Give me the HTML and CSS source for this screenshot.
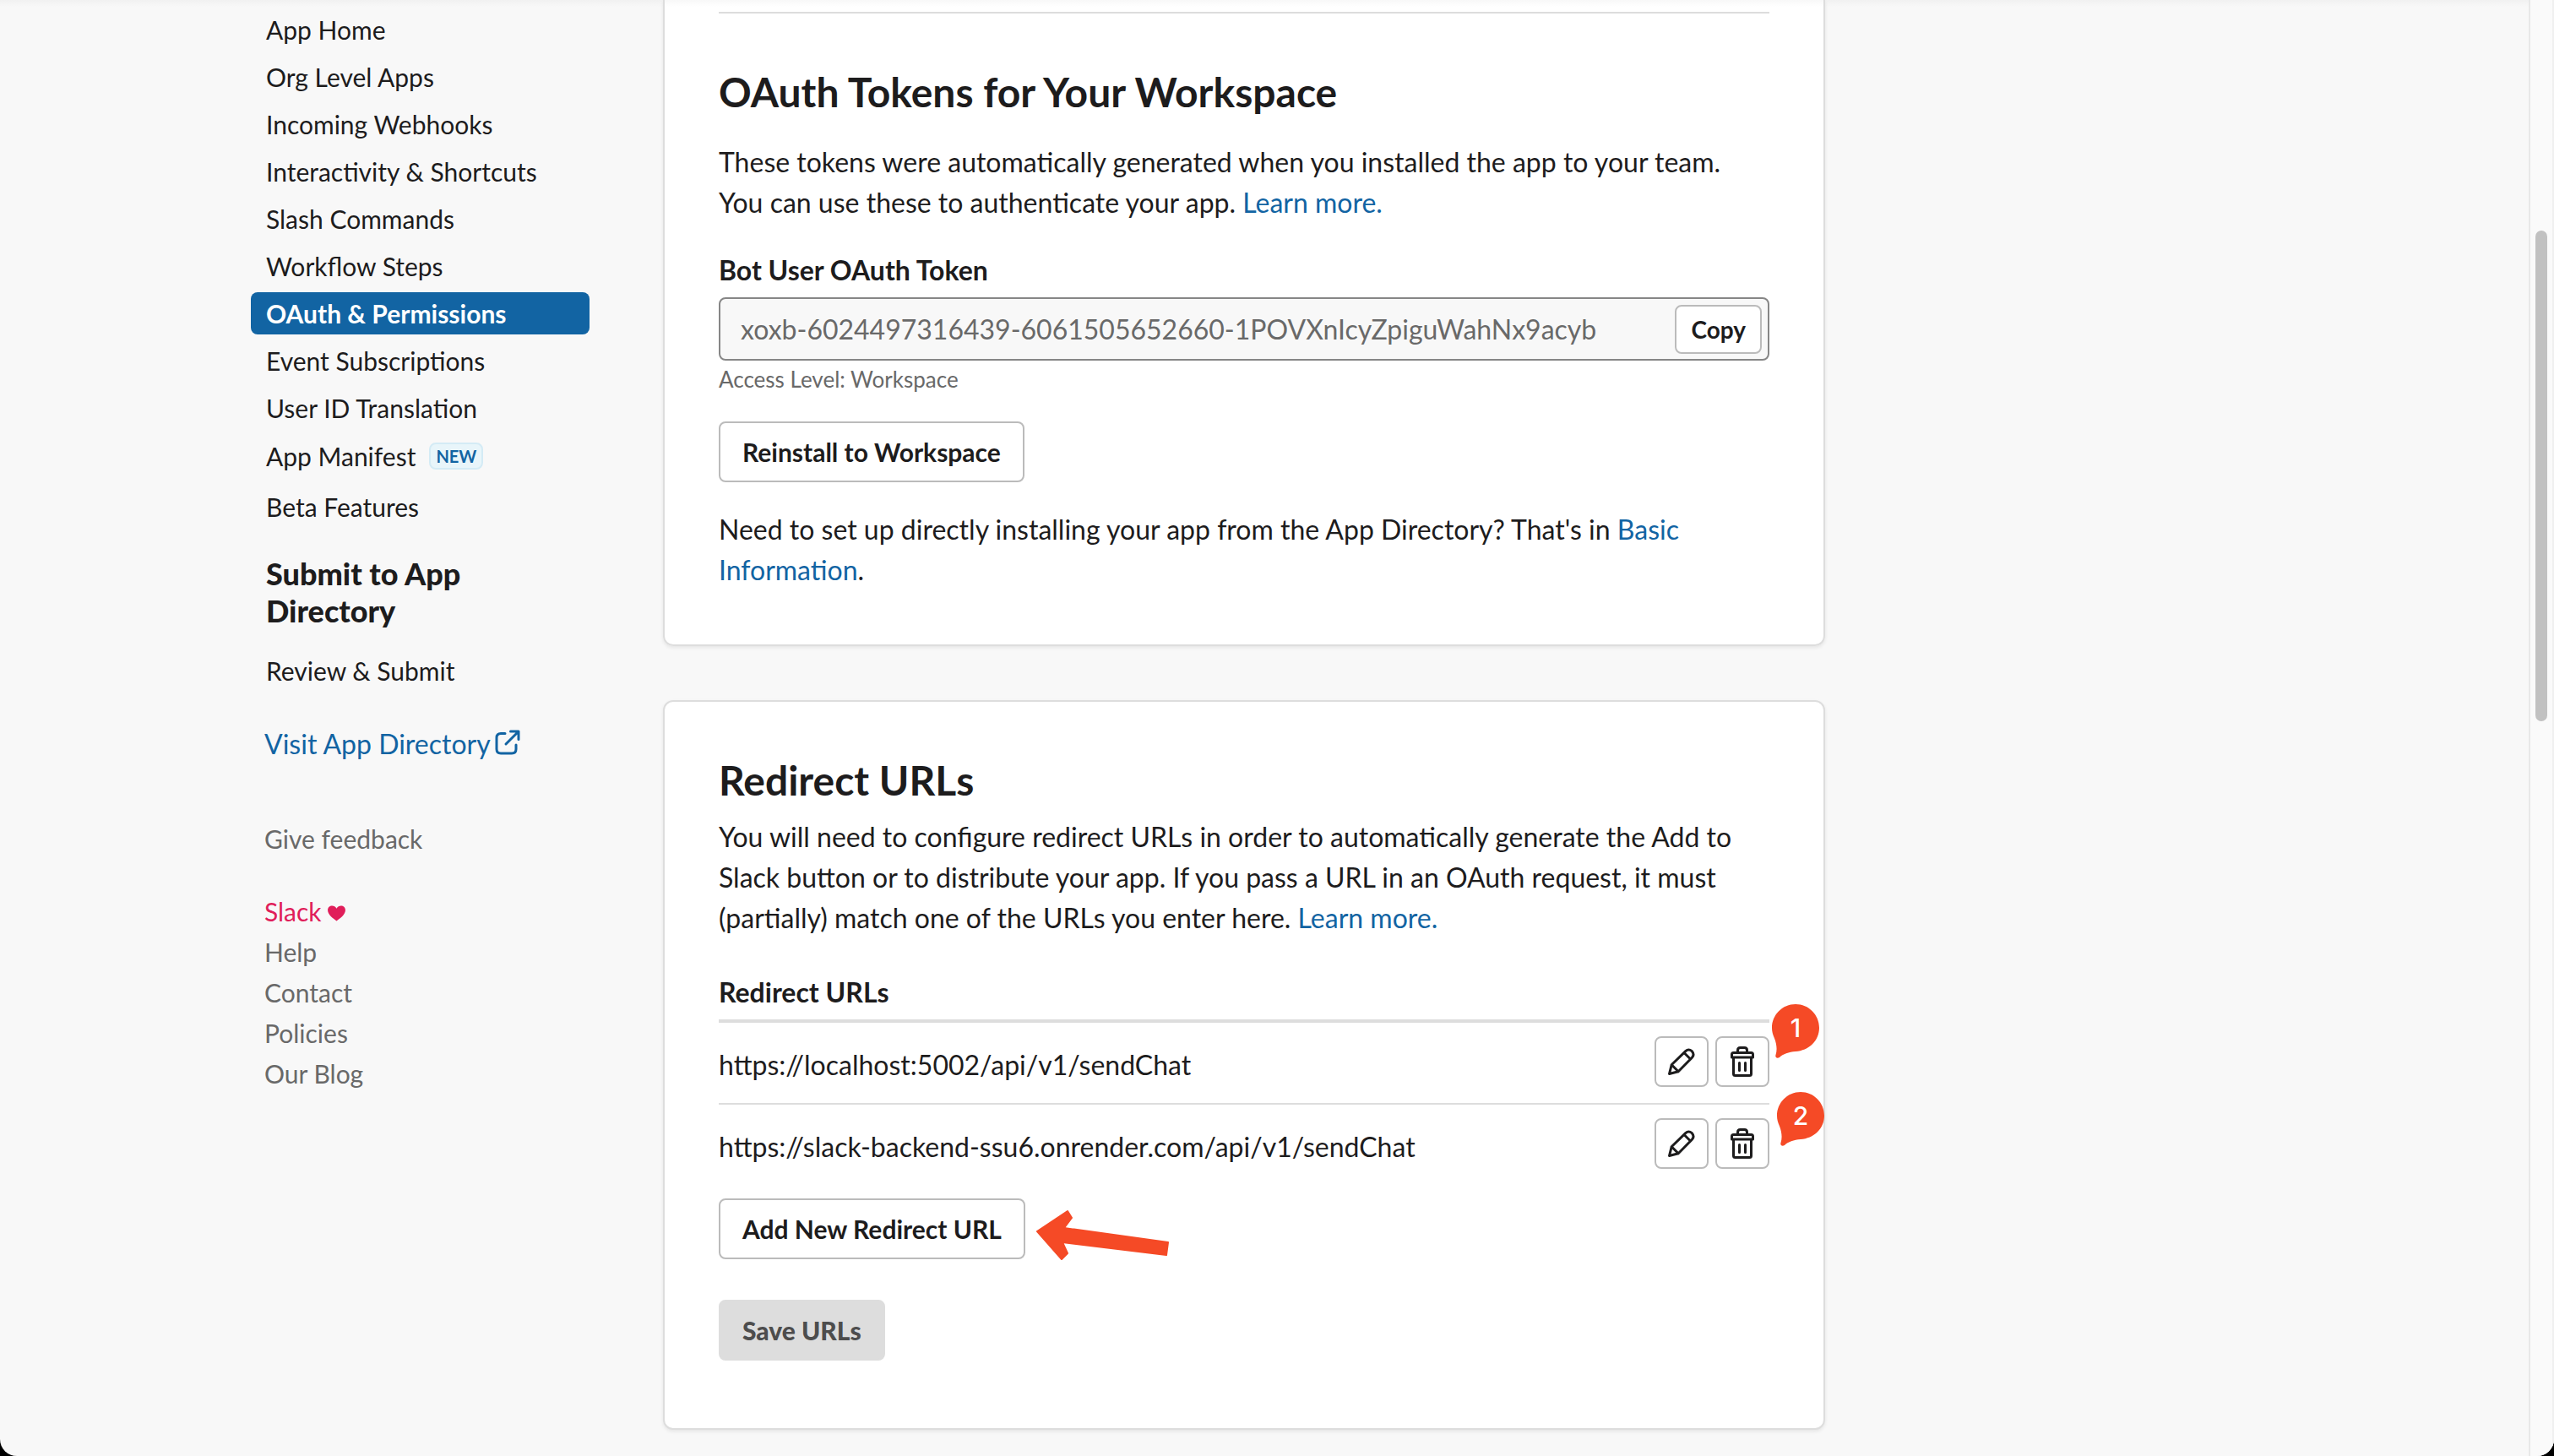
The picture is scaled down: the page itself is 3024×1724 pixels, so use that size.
FILE: index.html
```html
<!DOCTYPE html>
<html lang="en">
<head>
<meta charset="utf-8">
<title>OAuth &amp; Permissions</title>
<link rel="stylesheet" href="styles.css">
</head>
<body>
<svg class="sprite" aria-hidden="true">
  <symbol id="pencil" viewBox="0 0 32 32">
    <path d="M1.500 30.500 L4.200 19.800 L20.800 3.600 Q24.300 0.300 28.300 3.700 Q31.700 7.700 28.400 11.200 L12.200 27.800 Z M4.200 19.800 L12.200 27.800 M19 5.500 L26.500 13"/>
  </symbol>
  <symbol id="trash" viewBox="0 0 28 36">
    <path d="M8.500 7 V4.500 Q8.500 1.500 11.500 1.500 H16.500 Q19.500 1.500 19.500 4.500 V7 M3.500 7.500 H24.500 Q26.500 7.500 26.500 9.500 V13 H1.500 V9.500 Q1.500 7.500 3.500 7.500 Z M3.500 13 V32.500 Q3.500 34.500 5.500 34.500 H22.500 Q24.500 34.500 24.500 32.500 V13 M10.500 19.500 V28.500 M17.500 19.500 V28.500"/>
  </symbol>
  <symbol id="pin" viewBox="0 0 56 64">
    <path d="M28 0 C43.500 0 56 12.500 56 28 C56 43.500 43.500 55 28 56 C20 56.500 13 59 9 63 C6 65 3.500 63 4.500 60 C6.500 54 5.500 47 3 40.500 C1 36 0 32.500 0 28 C0 12.500 12.500 0 28 0 Z"/>
  </symbol>
</svg>
<div class="window">
  <div class="page">
    <aside class="sidebar">
      <nav class="menu">
        <a href="#">App Home</a>
        <a href="#">Org Level Apps</a>
        <a href="#">Incoming Webhooks</a>
        <a href="#">Interactivity &amp; Shortcuts</a>
        <a href="#">Slash Commands</a>
        <a href="#">Workflow Steps</a>
        <a href="#" class="active">OAuth &amp; Permissions</a>
        <a href="#">Event Subscriptions</a>
        <a href="#">User ID Translation</a>
        <a href="#" class="tagged">App Manifest <span class="tag">NEW</span></a>
        <a href="#">Beta Features</a>
      </nav>
      <h3 class="menu-title">Submit to App Directory</h3>
      <nav class="menu">
        <a href="#">Review &amp; Submit</a>
      </nav>
      <a class="directory" href="#">Visit App Directory<svg class="external" viewBox="0 0 30 30"><path d="M12 4.500 H7 Q2 4.500 2 9.500 V23 Q2 28 7 28 H20 Q25 28 25 23 V18 M13 17 L27 3 M18.500 2 H28 V11.500"/></svg></a>
      <div class="links">
        <a class="feedback" href="#">Give feedback</a>
        <a class="love" href="#">Slack <svg class="heart" viewBox="0 0 22 20"><path d="M11 19.500 C8 17 0 12 0 6 C0 0 8 -1.500 11 4 C14 -1.500 22 0 22 6 C22 12 14 17 11 19.500 Z"/></svg></a>
        <a href="#">Help</a>
        <a href="#">Contact</a>
        <a href="#">Policies</a>
        <a href="#">Our Blog</a>
      </div>
    </aside>
    <main class="content">
      <section class="card card-continued">
        <hr class="rule">
        <h2>OAuth Tokens for Your Workspace</h2>
        <p class="intro">These tokens were automatically generated when you installed the app to your team. You can use these to authenticate your app. <a href="#">Learn more.</a></p>
        <label class="label" for="token">Bot User OAuth Token</label>
        <div class="token">
          <input id="token" type="text" readonly value="xoxb-6024497316439-6061505652660-1POVXnIcyZpiguWahNx9acyb">
          <button class="btn btn-small" type="button">Copy</button>
        </div>
        <p class="hint">Access Level: Workspace</p>
        <button class="btn" type="button">Reinstall to Workspace</button>
        <p class="after">Need to set up directly installing your app from the App Directory? That's in <a href="#">Basic Information</a>.</p>
      </section>
      <section class="card">
        <h2>Redirect URLs</h2>
        <p class="lead">You will need to configure redirect URLs in order to automatically generate the Add to Slack button or to distribute your app. If you pass a URL in an OAuth request, it must (partially) match one of the URLs you enter here. <a href="#">Learn more.</a></p>
        <table class="urls">
          <thead>
            <tr><th colspan="2">Redirect URLs</th></tr>
          </thead>
          <tbody>
            <tr>
              <td class="url">https://localhost:5002/api/v1/sendChat</td>
              <td>
                <div class="actions">
                  <button class="btn btn-icon" type="button" aria-label="Edit"><svg class="pencil"><use href="#pencil"/></svg></button>
                  <button class="btn btn-icon" type="button" aria-label="Delete"><svg class="trash"><use href="#trash"/></svg></button>
                  <span class="marker marker-one"><svg><use href="#pin"/></svg><b>1</b></span>
                </div>
              </td>
            </tr>
            <tr>
              <td class="url">https://slack-backend-ssu6.onrender.com/api/v1/sendChat</td>
              <td>
                <div class="actions">
                  <button class="btn btn-icon" type="button" aria-label="Edit"><svg class="pencil"><use href="#pencil"/></svg></button>
                  <button class="btn btn-icon" type="button" aria-label="Delete"><svg class="trash"><use href="#trash"/></svg></button>
                  <span class="marker marker-two"><svg><use href="#pin"/></svg><b>2</b></span>
                </div>
              </td>
            </tr>
          </tbody>
        </table>
        <div class="add">
          <button class="btn" type="button">Add New Redirect URL</button>
          <svg class="arrow" viewBox="0 0 158 62"><path d="M2 27 L38 3 L43 11 L34 23 L157 40 L155 55 L32 40 L38 53 L31 60 Z"/></svg>
        </div>
        <button class="btn btn-disabled" type="button" disabled>Save URLs</button>
      </section>
    </main>
  </div>
  <div class="scrollbar"><div class="thumb"></div></div>
</div>
</body>
</html>
```
FILE: styles.css
```css
* {
  box-sizing: border-box;
}

body {
  margin: 0;
  background: #000;
  color: #1d1c1d;
  font-family: Lato, "Open Sans", sans-serif;
  font-size: 32px;
  line-height: 48px;
}

a {
  color: #1264a3;
  text-decoration: none;
}

h2, h3, p {
  margin: 0;
}

.sprite {
  position: absolute;
  width: 0;
  height: 0;
}

.window {
  display: flex;
  min-height: 100vh;
  overflow: hidden;
  border-radius: 0 0 20px 20px;
  background: linear-gradient(#f1f1f1, #f8f8f8 8px);
}

.page {
  flex: 1;
  display: flex;
  gap: 87px;
  max-width: 2400px;
  margin: 0 auto;
}

.scrollbar {
  width: 30px;
  padding: 273px 6px 0;
  border-left: 2px solid #e8e8e8;
  border-right: 2px solid #f0f0f0;
  background: #fafafa;
}

.thumb {
  width: 14px;
  height: 581px;
  border-radius: 7px;
  background: #c1c1c1;
}

/* Sidebar */

.sidebar {
  width: 401px;
  padding-top: 10px;
}

.menu {
  display: flex;
  flex-direction: column;
  gap: 6px;
  font-size: 30px;
}

.menu a {
  height: 50px;
  padding: 0 18px;
  border-radius: 8px;
  color: #1d1c1d;
  line-height: 50px;
}

.menu .active {
  background: #1264a3;
  color: #fff;
  font-weight: 700;
}

.menu .tagged {
  display: flex;
  align-items: center;
  gap: 16px;
  height: 55px;
  padding-bottom: 4px;
}

.tag {
  padding: 0 6px;
  border: 2px solid #d4ebf5;
  border-radius: 8px;
  background: #e8f5fa;
  color: #1264a3;
  font-size: 20px;
  font-weight: 700;
  line-height: 28px;
}

.menu-title {
  padding: 0 100px 0 18px;
  margin: 32px 0 24px;
  font-size: 36px;
  font-weight: 900;
  line-height: 44px;
}

.directory {
  display: flex;
  align-items: center;
  gap: 5px;
  margin: 38px 0 0 16px;
}

.external {
  width: 30px;
  height: 30px;
  margin-bottom: 4px;
  fill: none;
  stroke: currentColor;
  stroke-width: 3;
  stroke-linecap: round;
  stroke-linejoin: round;
}

.links {
  display: flex;
  flex-direction: column;
  margin: 64px 0 0 16px;
  font-size: 30px;
}

.links a {
  color: #696969;
}

.links .feedback {
  margin-bottom: 38px;
}

.links .love {
  color: #e01e5a;
}

.heart {
  width: 21px;
  height: 19px;
  fill: currentColor;
}

/* Cards */

.content {
  display: flex;
  flex-direction: column;
  gap: 64px;
  flex: 0 1 1376px;
}

.card {
  padding: 66px 64px 80px;
  border: 2px solid #ddd;
  border-radius: 12px;
  background: #fff;
  box-shadow: 0 2px 4px rgba(0, 0, 0, 0.08);
}

.card-continued {
  padding: 14px 64px 64px;
  border-top: 0;
  border-radius: 0 0 12px 12px;
  background: linear-gradient(#f8f8f8, #fff 8px);
}

.rule {
  height: 2px;
  margin: 0 0 66px;
  border: 0;
  background: #ddd;
}

h2 {
  font-size: 48px;
  font-weight: 700;
  line-height: 54px;
}

.intro {
  margin: 32px 0;
}

.lead {
  margin: 16px 0 40px;
}

.label {
  display: block;
  font-weight: 700;
}

.token {
  display: flex;
  align-items: center;
  height: 75px;
  margin-top: 8px;
  padding: 0 7px 0 24px;
  border: 2px solid #868686;
  border-radius: 8px;
  background: #f8f8f8;
}

.token input {
  flex: 1;
  min-width: 0;
  padding: 0;
  border: 0;
  outline: 0;
  background: transparent;
  color: #696969;
  font: inherit;
}

.hint {
  margin: 2px 0 30px;
  color: #696969;
  font-size: 26px;
  line-height: 40px;
}

.after {
  margin-top: 32px;
}

.btn {
  display: block;
  height: 72px;
  padding: 0 26px;
  border: 2px solid #bbb;
  border-radius: 8px;
  background: #fff;
  color: #1d1c1d;
  font: 700 30px/40px Lato, "Open Sans", sans-serif;
  white-space: nowrap;
}

.btn-small {
  height: 58px;
  padding: 0 17px;
  font-size: 28px;
}

.btn-icon {
  display: flex;
  align-items: center;
  justify-content: center;
  width: 64px;
  height: 60px;
  padding: 0;
}

.btn-icon svg {
  fill: none;
  stroke: #1d1c1d;
  stroke-width: 3;
  stroke-linecap: round;
  stroke-linejoin: round;
}

.pencil {
  width: 32px;
  height: 32px;
}

.trash {
  width: 28px;
  height: 36px;
}

.btn-disabled {
  border-color: #ddd;
  background: #ddd;
  color: #4d4d4d;
  font-weight: 900;
}

/* Redirect URL table */

.urls {
  width: 100%;
  border-spacing: 0;
}

.urls th {
  padding: 0 0 8px;
  border-bottom: 4px solid #ddd;
  text-align: left;
}

.urls td {
  padding: 16px 0 19px;
}

.urls .url {
  padding-top: 24px;
}

.urls tbody tr + tr td {
  border-top: 2px solid #ddd;
}

.actions {
  position: relative;
  display: flex;
  justify-content: flex-end;
  gap: 8px;
}

.marker {
  position: absolute;
  width: 56px;
  height: 64px;
}

.marker svg {
  width: 56px;
  height: 64px;
  fill: #f54a26;
}

.marker b {
  position: absolute;
  inset: 0 0 8px;
  color: #fff;
  font: 500 30px/56px Inter, sans-serif;
  text-align: center;
}

.marker-one {
  top: -38px;
  right: -59px;
}

.marker-two {
  top: -31px;
  right: -65px;
}

.add {
  position: relative;
  margin: 16px 0 48px;
}

.arrow {
  position: absolute;
  top: 12px;
  left: 375px;
  width: 158px;
  height: 62px;
  fill: #f54a26;
  stroke: #f54a26;
  stroke-width: 2;
  stroke-linejoin: round;
}
```
